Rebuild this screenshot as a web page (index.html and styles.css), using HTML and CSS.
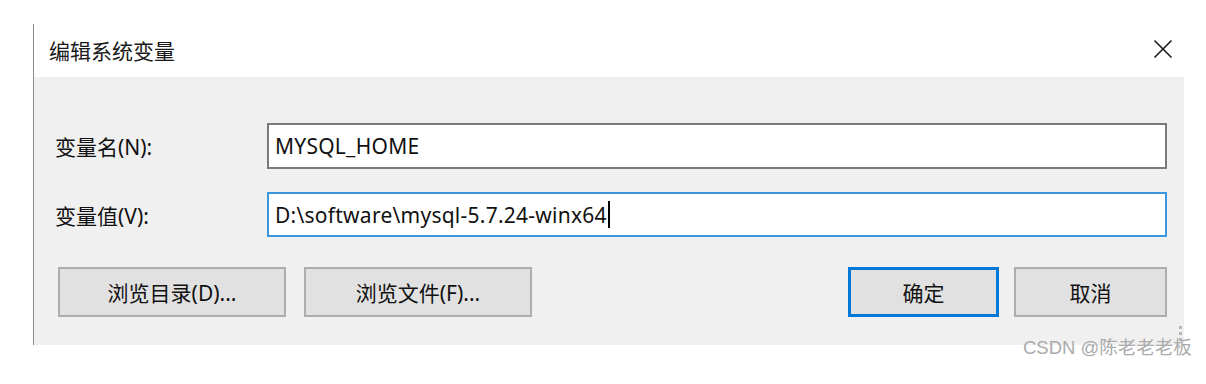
FILE: index.html
```html
<!DOCTYPE html>
<html lang="zh">
<head>
<meta charset="utf-8">
<title>编辑系统变量</title>
<link rel="stylesheet" href="styles.css">
</head>
<body>
<div class="page">
  <div class="window">
    <div class="titlebar">
      <span class="title">编辑系统变量</span>
      <svg class="close" width="20" height="20" viewBox="0 0 20 20">
        <path d="M1.5 1.5 L18.5 18.5 M18.5 1.5 L1.5 18.5" stroke="#1a1a1a" stroke-width="1.6" fill="none"/>
      </svg>
    </div>
    <div class="panel">
      <div class="fields">
        <label class="label">变量名(N):</label>
        <div class="input input-name">MYSQL_HOME</div>
        <label class="label">变量值(V):</label>
        <div class="input input-value">D:\software\mysql-5.7.24-winx64<span class="caret"></span></div>
      </div>
      <div class="buttons">
        <div class="group">
          <div class="btn btn-wide">浏览目录(D)...</div>
          <div class="btn btn-wide">浏览文件(F)...</div>
        </div>
        <div class="group group-right">
          <div class="btn btn-ok">确定</div>
          <div class="btn btn-cancel">取消</div>
        </div>
      </div>
    </div>
  </div>
  <div class="grip"><i></i><i></i><i></i></div>
  <div class="watermark">CSDN @陈老老老板</div>
</div>
</body>
</html>
```

FILE: styles.css
```css
html, body {
  margin: 0;
  padding: 0;
  background: #ffffff;
}
body {
  width: 1206px;
  height: 384px;
  overflow: hidden;
  font-family: "Noto Sans", "Noto Sans CJK SC", sans-serif;
  color: #111;
}
.page {
  position: relative;
  width: 1206px;
  height: 384px;
  padding: 24px 0 0 33px;
  box-sizing: border-box;
}
.window {
  width: 1150px;
  border-left: 1px solid #8a8a8a;
}
.titlebar {
  height: 53px;
  display: flex;
  align-items: center;
  justify-content: space-between;
  padding: 0 11px 0 15px;
  box-sizing: border-box;
  background: #fff;
}
.title {
  font-family: "Noto Sans CJK SC", sans-serif;
  font-size: 21px;
  color: #1a1a1a;
  margin-top: -2px;
}
.close {
  display: block;
  margin-top: -4px;
}
.panel {
  background: #f0f0f0;
  height: 268px;
  box-sizing: border-box;
  padding: 46px 16px 0 21px;
}
.fields {
  display: grid;
  grid-template-columns: 212px 900px;
  row-gap: 23px;
  align-items: center;
}
.label {
  font-size: 21px;
  color: #111;
  font-family: "Noto Sans", "Noto Sans CJK SC", sans-serif;
}
.input {
  height: 46px;
  box-sizing: border-box;
  background: #fff;
  font-size: 21px;
  letter-spacing: 0.25px;
  display: flex;
  align-items: center;
  padding-left: 6px;
  white-space: nowrap;
  color: #111;
}
.input-name {
  border: 2px solid #7a7a7a;
}
.input-value {
  height: 45px;
  border: 2px solid #3a96dd;
}
.caret {
  display: inline-block;
  width: 2px;
  height: 27px;
  background: #000;
  margin-left: 1px;
}
.buttons {
  display: flex;
  justify-content: space-between;
  margin-top: 30px;
  padding: 0 1px 0 3px;
}
.group {
  display: flex;
  gap: 18px;
}
.group-right {
  gap: 15px;
}
.btn {
  height: 50px;
  box-sizing: border-box;
  background: #e1e1e1;
  border: 2px solid #adadad;
  display: flex;
  align-items: center;
  justify-content: center;
  font-size: 21px;
  color: #111;
}
.btn-wide {
  width: 228px;
}
.btn-ok {
  width: 151px;
  border: 3px solid #0078d7;
}
.btn-cancel {
  width: 153px;
}
.watermark {
  position: absolute;
  left: 1023px;
  top: 333px;
  font-family: "Liberation Sans", "Noto Sans CJK SC", sans-serif;
  font-size: 18.5px;
  color: #ababab;
  white-space: nowrap;
}
.grip {
  position: absolute;
  left: 1179px;
  top: 326px;
  display: flex;
  flex-direction: column;
  gap: 3px;
}
.grip i {
  display: block;
  width: 3px;
  height: 3px;
  background: #b5b5b5;
}
```
